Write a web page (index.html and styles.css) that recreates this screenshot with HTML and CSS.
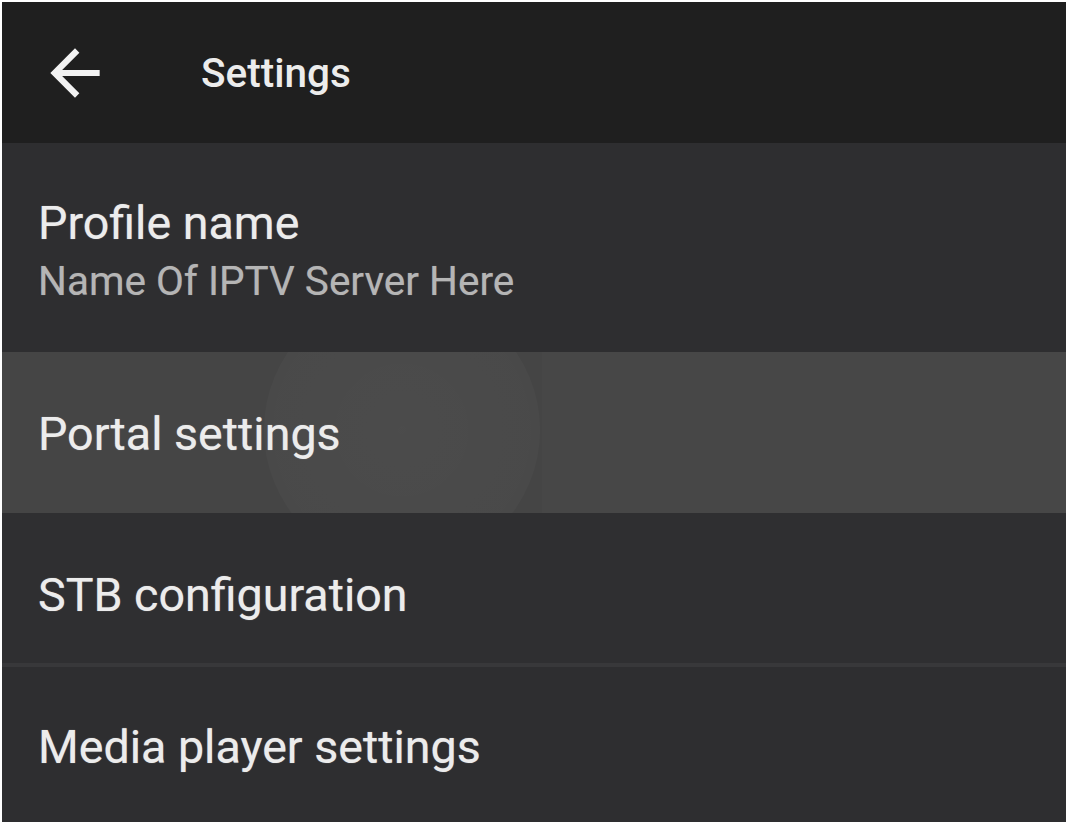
FILE: index.html
```html
<!DOCTYPE html>
<html lang="en">
<head>
    <meta charset="UTF-8">
    <meta name="viewport" content="width=device-width, initial-scale=1.0">
    <title>Settings</title>
    <link rel="stylesheet" href="styles.css">
</head>
<body>
    <div class="screen">
        <header class="toolbar">
            <button class="back-btn" aria-label="Back">
                <svg viewBox="0 0 24 24" width="74" height="74">
                    <path fill="#f2f2f2" d="M20 11H7.83l5.59-5.59L12 4l-8 8 8 8 1.41-1.41L7.83 13H20v-2z"/>
                </svg>
            </button>
            <h1 class="toolbar-title">Settings</h1>
        </header>

        <div class="settings-list">
            <div class="setting-item profile">
                <div class="setting-title">Profile name</div>
                <div class="setting-summary">Name Of IPTV Server Here</div>
            </div>
            <div class="setting-item portal active">
                <div class="setting-title">Portal settings</div>
            </div>
            <div class="setting-item stb">
                <div class="setting-title">STB configuration</div>
            </div>
            <div class="setting-item media">
                <div class="setting-title">Media player settings</div>
            </div>
        </div>
    </div>
</body>
</html>
```

FILE: styles.css
```css
body {
    margin: 0;
    padding: 2px 4px 0 2px;
    background-color: #ffffff;
    font-family: Roboto, "Noto Sans", Arial, sans-serif;
    overflow: hidden;
}

.screen {
    height: 820px;
    background: #2e2e30;
    display: flex;
    flex-direction: column;
}

.toolbar {
    height: 141px;
    flex-shrink: 0;
    background: #1f1f1f;
    display: flex;
    align-items: center;
    padding-left: 36px;
}

.back-btn {
    background: none;
    border: none;
    padding: 0;
    width: 74px;
    height: 74px;
    display: flex;
    cursor: pointer;
}

.toolbar-title {
    margin: 0 0 0 89px;
    font-size: 40.5px;
    font-weight: 500;
    color: #ececec;
}

.settings-list {
    flex: 1;
    display: flex;
    flex-direction: column;
}

.setting-item {
    padding: 56px 36px 0;
    box-sizing: border-box;
    position: relative;
    overflow: hidden;
}

.setting-title {
    font-size: 46.6px;
    line-height: 52px;
    color: #ececec;
    position: relative;
    text-shadow: 0 0 1px rgba(236, 236, 236, 0.6);
}

.setting-summary {
    margin-top: 8px;
    font-size: 40.5px;
    line-height: 48px;
    color: #b5b5b5;
    text-shadow: 0 0 1px rgba(181, 181, 181, 0.5);
}

.profile {
    height: 209px;
    padding-top: 54px;
    background: #2e2e30;
}

.portal {
    height: 161px;
    padding-top: 56px;
    background: #454545;
}

/* touch ripple left on the pressed row */
.portal::before {
    content: "";
    position: absolute;
    left: 262px;
    top: -60px;
    width: 276px;
    height: 276px;
    border-radius: 50%;
    background: radial-gradient(circle, rgba(255, 255, 255, 0.035) 0%, rgba(255, 255, 255, 0.025) 70%, rgba(255, 255, 255, 0) 100%);
}

.portal::after {
    content: "";
    position: absolute;
    left: 540px;
    right: 0;
    top: 0;
    bottom: 0;
    background: rgba(255, 255, 255, 0.012);
}

.stb {
    height: 154px;
    background: #2f2f31;
    border-bottom: 4px solid #38383a;
}

.media {
    flex: 1;
    padding-top: 54px;
    background: #2e2e30;
}
```
